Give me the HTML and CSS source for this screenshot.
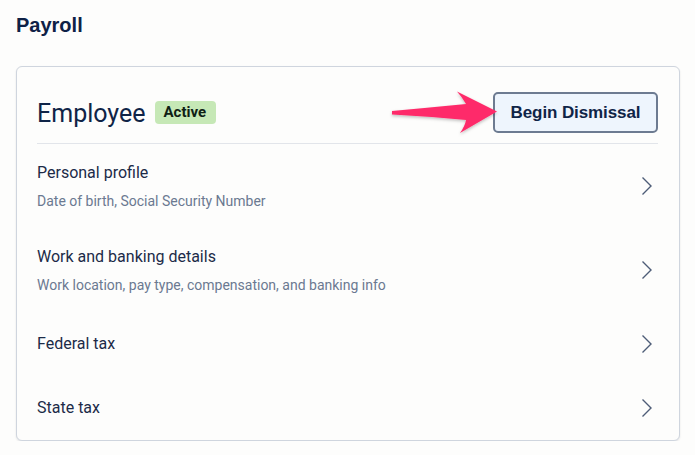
FILE: index.html
```html
<!DOCTYPE html>
<html>
<head>
<meta charset="utf-8">
<link rel="stylesheet" href="styles.css">
</head>
<body>
<h1 class="page-title">Payroll</h1>
<section class="card">
  <header class="card-header">
    <div class="title-group">
      <h2 class="card-title">Employee</h2>
      <span class="badge">Active</span>
    </div>
    <button class="btn">Begin Dismissal</button>
  </header>
  <ul class="rows">
    <li class="row">
      <div class="row-text">
        <div class="row-title">Personal profile</div>
        <div class="row-sub">Date of birth, Social Security Number</div>
      </div>
      <svg class="chev" viewBox="0 0 24 24"><path d="M8.5 3.5 L17 12 L8.5 20.5"/></svg>
    </li>
    <li class="row">
      <div class="row-text">
        <div class="row-title">Work and banking details</div>
        <div class="row-sub">Work location, pay type, compensation, and banking info</div>
      </div>
      <svg class="chev" viewBox="0 0 24 24"><path d="M8.5 3.5 L17 12 L8.5 20.5"/></svg>
    </li>
    <li class="row row-single">
      <div class="row-text">
        <div class="row-title">Federal tax</div>
      </div>
      <svg class="chev" viewBox="0 0 24 24"><path d="M8.5 3.5 L17 12 L8.5 20.5"/></svg>
    </li>
    <li class="row row-single">
      <div class="row-text">
        <div class="row-title">State tax</div>
      </div>
      <svg class="chev" viewBox="0 0 24 24"><path d="M8.5 3.5 L17 12 L8.5 20.5"/></svg>
    </li>
  </ul>
</section>
<svg class="arrow" viewBox="0 0 695 455" width="695" height="455">
  <defs>
    <filter id="sh" x="-20%" y="-20%" width="140%" height="140%">
      <feDropShadow dx="0" dy="1.5" stdDeviation="1.5" flood-color="#000" flood-opacity="0.25"/>
    </filter>
  </defs>
  <path filter="url(#sh)" fill="#fe2c6a" d="M392 111 Q430 107.5 466 104 Q462 97 457 91.5 L497 111.5 L460 133 Q465 126 466 120 Q430 116.5 392 114.5 Z"/>
</svg>
</body>
</html>
```

FILE: styles.css
```css
html, body {
  margin: 0;
  background: #fdfdfc;
}
body {
  position: relative;
  padding: 13px 15px 0 16px;
  font-family: Roboto, "Liberation Sans", sans-serif;
  color: #0f2447;
}
.page-title {
  margin: 0;
  font-family: "Liberation Sans", Arial, sans-serif;
  font-weight: bold;
  font-size: 20px;
  line-height: 24px;
  color: #0e2146;
}
.card {
  margin-top: 29px;
  border: 1px solid #cfd5de;
  border-radius: 6px;
  background: #fdfdfc;
  box-shadow: 0 1px 2px rgba(30, 40, 60, 0.12);
  padding: 25px 21px 0 20px;
}
.card-header {
  display: flex;
  align-items: center;
  justify-content: space-between;
  height: 41px;
  padding-bottom: 10px;
  border-bottom: 1px solid #e2e5ea;
}
.title-group {
  display: flex;
  align-items: center;
  gap: 9px;
}
.card-title {
  margin: 0;
  font-weight: 400;
  font-size: 25px;
  line-height: 30px;
  color: #0f2447;
  position: relative;
  top: 1px;
}
.badge {
  display: inline-block;
  background: #c6e8b6;
  color: #0f2014;
  font-weight: bold;
  font-size: 15px;
  line-height: 23px;
  padding: 0 10px 0 9px;
  border-radius: 4px;
}
.btn {
  width: 165px;
  height: 41px;
  border: 2px solid #6d7b91;
  border-radius: 5px;
  background: #eef5fd;
  color: #0f2447;
  font-family: "Liberation Sans", Arial, sans-serif;
  font-weight: bold;
  font-size: 17px;
  padding: 0;
  letter-spacing: -0.1px;
}
.rows {
  list-style: none;
  margin: 0;
  padding: 0;
}
.row {
  display: flex;
  align-items: center;
  justify-content: space-between;
  padding: 17px 0;
}
.row-single {
  padding: 0;
  min-height: 64px;
}
.row-title {
  font-size: 16px;
  line-height: 24px;
  color: #1c2b48;
}
.row-sub {
  margin-top: 6px;
  font-size: 14px;
  line-height: 20px;
  color: #6b7991;
}
.chev {
  width: 24px;
  height: 24px;
  fill: none;
  stroke: #4d5c77;
  stroke-width: 1.4;
}
.arrow {
  position: absolute;
  left: 0;
  top: 0;
  pointer-events: none;
}
```
